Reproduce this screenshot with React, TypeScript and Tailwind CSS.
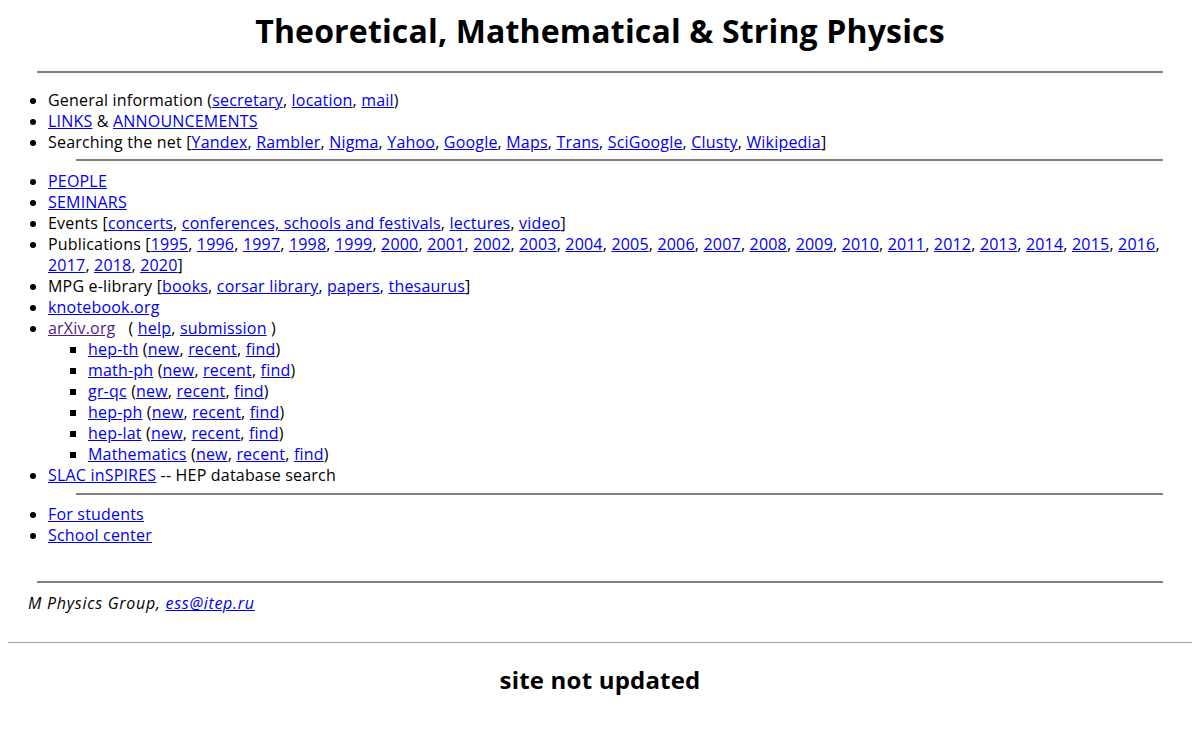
import React from "react";

const A = ({ children, visited }: { children: React.ReactNode; visited?: boolean }) => (
  <a href="#" className={visited ? "underline text-[#551a8b]" : "underline text-[#0000ee]"}>
    {children}
  </a>
);

function LinkList({ items }: { items: string[] }) {
  return (
    <>
      {items.map((t, i) => (
        <React.Fragment key={t + i}>
          <A>{t}</A>
          {i < items.length - 1 ? ", " : ""}
        </React.Fragment>
      ))}
    </>
  );
}

const years = [
  "1995", "1996", "1997", "1998", "1999", "2000", "2001", "2002", "2003", "2004", "2005", "2006",
  "2007", "2008", "2009", "2010", "2011", "2012", "2013", "2014", "2015", "2016", "2017", "2018", "2020",
];

const subs = ["hep-th", "math-ph", "gr-qc", "hep-ph", "hep-lat", "Mathematics"];

export default function App() {
  return (
    <div className="bg-white min-h-[740px] px-[8px] text-black font-['Open_Sans','Noto_Sans',sans-serif] text-[16px] leading-[21px] tracking-[0.012em]">
      <h1 className="pt-[12px] text-center text-[32px] leading-[37px] font-bold tracking-[0.005em]">
        Theoretical, Mathematical &amp; String Physics
      </h1>
      <div className="mt-[22px] mx-[29px] h-[2px] bg-[#808080]" />

      <ul className="mt-[17px] pl-[40px] list-disc">
        <li>
          General information (<LinkList items={["secretary", "location", "mail"]} />)
        </li>
        <li>
          <A>LINKS</A> &amp; <A>ANNOUNCEMENTS</A>
        </li>
        <li>
          Searching the net [
          <LinkList
            items={["Yandex", "Rambler", "Nigma", "Yahoo", "Google", "Maps", "Trans", "SciGoogle", "Clusty", "Wikipedia"]}
          />
          ]
        </li>
      </ul>

      <div className="mt-[6px] ml-[68px] mr-[29px] h-[2px] bg-[#808080]" />

      <ul className="mt-[10px] pl-[40px] list-disc">
        <li>
          <A>PEOPLE</A>
        </li>
        <li>
          <A>SEMINARS</A>
        </li>
        <li>
          Events [<LinkList items={["concerts", "conferences, schools and festivals", "lectures", "video"]} />]
        </li>
        <li>
          Publications [<LinkList items={years} />]
        </li>
        <li>
          MPG e-library [<LinkList items={["books", "corsar library", "papers", "thesaurus"]} />]
        </li>
        <li>
          <A>knotebook.org</A>
        </li>
        <li>
          <A visited>arXiv.org</A>
          {"\u00a0\u00a0\u00a0( "}
          <A>help</A>, <A>submission</A> )
          <ul className="pl-[40px] list-[square]">
            {subs.map((s) => (
              <li key={s}>
                <A>{s}</A> (<LinkList items={["new", "recent", "find"]} />)
              </li>
            ))}
          </ul>
        </li>
        <li>
          <A>SLAC inSPIRES</A> -- HEP database search
        </li>
      </ul>

      <div className="mt-[7px] ml-[68px] mr-[29px] h-[2px] bg-[#808080]" />

      <ul className="mt-[9px] pl-[40px] list-disc">
        <li>
          <A>For students</A>
        </li>
        <li>
          <A>School center</A>
        </li>
      </ul>

      <div className="mt-[35px] mx-[29px] h-[2px] bg-[#808080]" />

      <p className="mt-[10px] pl-[20px] italic tracking-[0.045em]">
        M Physics Group, <A>ess@itep.ru</A>
      </p>

      <div className="mt-[28px] h-px bg-[#a0a0a0]" />

      <h2 className="mt-[23px] text-center text-[24px] leading-[28px] font-bold">site not updated</h2>
    </div>
  );
}
